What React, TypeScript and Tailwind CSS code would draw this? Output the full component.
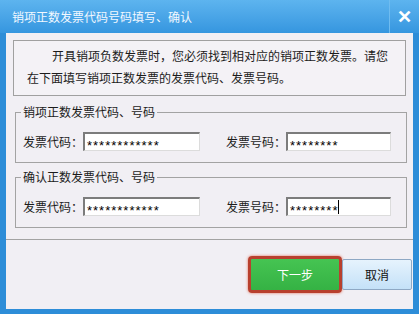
import React from "react";

const font = { fontFamily: '"Noto Sans CJK SC", "Liberation Sans", sans-serif' };

const Field: React.FC<{ label: string; value: string; width: string; caret?: boolean }> = ({
  label,
  value,
  width,
  caret,
}) => (
  <div className="flex items-center">
    <span className="w-[60px] text-[12px] leading-[16px] text-[#1c1c1c]">{label}</span>
    <div
      className={`${width} h-[19px] bg-white border-t-2 border-l-2 border-b border-r border-t-[#7c7c7c] border-l-[#7c7c7c] border-b-[#dcdcdc] border-r-[#dcdcdc] flex items-center pl-[2px]`}
    >
      <span className="font-['Liberation_Sans'] text-[13px] leading-[13px] tracking-[1px] text-black translate-y-[3px]">
        {value}
      </span>
      {caret && <span className="w-px h-[14px] bg-black" />}
    </div>
  </div>
);

const Group: React.FC<{ title: string; caret?: boolean }> = ({ title, caret }) => (
  <fieldset className="border border-[#a3a3a3] ml-[9px] mr-[6px] pl-[7px] pt-[12px] pb-[11px]">
    <legend className="text-[12px] leading-[16px] text-[#1c1c1c] px-[2px] -ml-[2px]">{title}</legend>
    <div className="flex items-center">
      <Field label="发票代码：" value="************" width="w-[117px]" />
      <div className="w-[26px]" />
      <Field label="发票号码：" value="********" width="w-[105px]" caret={caret} />
    </div>
  </fieldset>
);

export default function App() {
  return (
    <div style={font} className="w-[419px] h-[314px] bg-[#2d8dd8] flex flex-col overflow-hidden">
      {/* title bar */}
      <div className="h-[33px] flex items-center bg-gradient-to-b from-[#5db4ef] to-[#3596df] shrink-0">
        <span className="ml-[12px] text-[12px] text-[#f2f8ff] flex-1">销项正数发票代码号码填写、确认</span>
        <div className="h-full w-px bg-[#2a7fc4] border-r border-[#6fbcf0]" />
        <span className="w-[29px] text-center text-white font-black text-[18px] leading-none -mt-[4px]">✕</span>
      </div>

      {/* body */}
      <div className="flex-1 mx-[6px] mb-[5px] bg-[#f1eff4] flex flex-col">
        <div className="mt-[7px] mx-[7px] h-[56px] border border-[#a0a0a0] bg-[#f4f2f6] pl-[13px] pt-[4px] text-[12px] leading-[22px] text-[#1c1c1c]">
          <p className="indent-[25px]">开具销项负数发票时，您必须找到相对应的销项正数发票。请您</p>
          <p>在下面填写销项正数发票的发票代码、发票号码。</p>
        </div>

        <div className="mt-[8px]">
          <Group title="销项正数发票代码、号码" />
        </div>
        <div className="mt-[6px]">
          <Group title="确认正数发票代码、号码" caret />
        </div>

        <div className="mt-[11px] h-px bg-[#a3a3a3]" />

        <div className="flex items-center justify-end mt-[16px] pr-[1px]">
          <button className="w-[94px] h-[37px] rounded-[4px] border-[3px] border-[#b8402e] bg-gradient-to-b from-[#45c452] to-[#35b244] text-white text-[12px] shadow-[0_0_3px_#e0705a]">
            下一步
          </button>
          <button className="w-[70px] h-[31px] rounded-[2px] border border-[#8ea8c4] bg-gradient-to-b from-[#e6f3fd] to-[#c4e1f8] text-[#111] text-[12px]">
            取消
          </button>
        </div>
      </div>
    </div>
  );
}
